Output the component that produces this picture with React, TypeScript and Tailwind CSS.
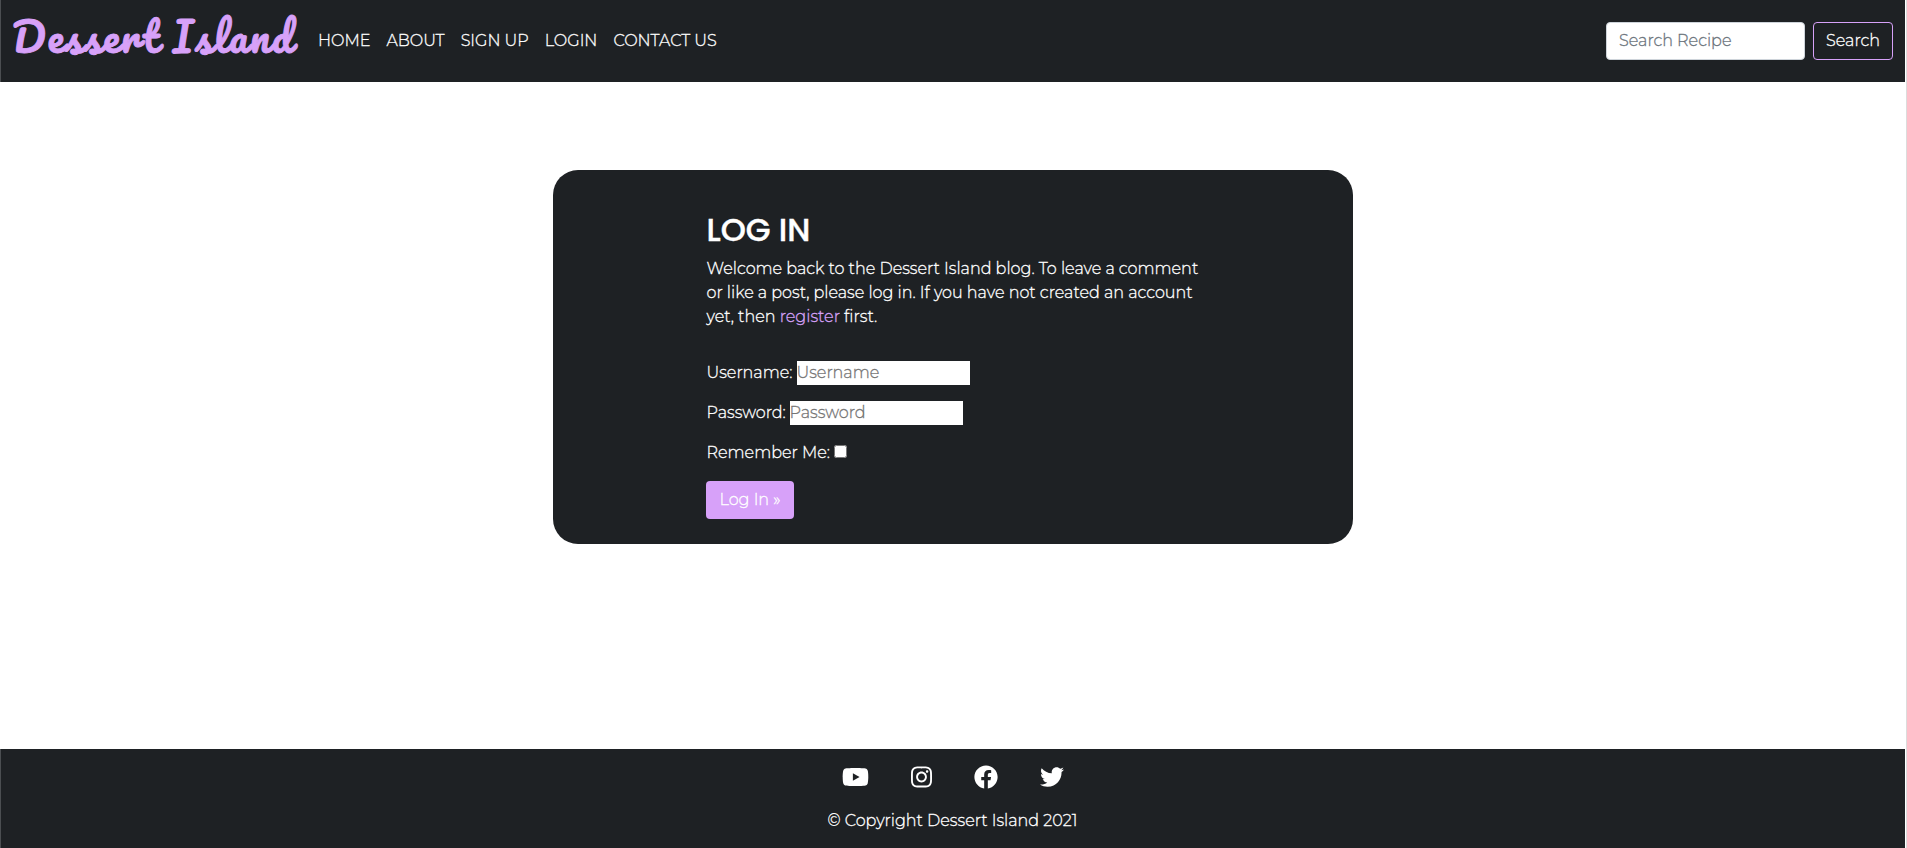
import React from "react";
import { FaFacebook, FaInstagram, FaTwitter, FaYoutube } from "react-icons/fa";

const links = ["HOME", "ABOUT", "SIGN UP", "LOGIN", "CONTACT US"];

function Navbar() {
  return (
    <nav className="flex h-[82px] items-center border-l border-[#4b4e51] bg-[#1e2124] pr-3 pl-[11px]">
      <a className="w-[298px] pb-[10px] font-['Pacifico',cursive] text-[40px] leading-[60px] font-normal tracking-[2px] whitespace-nowrap text-[#d7a1f9] [-webkit-text-stroke:0.9px_#d7a1f9]">
        Dessert Island
      </a>
      <ul className="flex">
        {links.map((label) => (
          <li key={label} className="px-2 py-2 whitespace-nowrap">
            {label}
          </li>
        ))}
      </ul>
      <form className="ml-auto flex gap-2">
        <input
          className="h-[38px] w-[199px] rounded-[4px] border border-[#ced4da] bg-white px-3 pt-[5px] pb-[7px] placeholder:text-[#6c757d] placeholder:[-webkit-text-stroke:0.3px_#6c757d]"
          placeholder="Search Recipe"
        />
        <button
          type="button"
          className="h-[38px] w-20 rounded-[4px] border border-[#d7a1f9] text-center"
        >
          Search
        </button>
      </form>
    </nav>
  );
}

function LoginCard() {
  return (
    <section className="mx-auto mt-[88px] h-[374px] w-[800px] rounded-[25px] bg-[#1e2124] pt-[41px] pl-[153px]">
      <h2 className="mb-2 pl-px font-['Poppins','Montserrat',sans-serif] text-[32px] leading-[38px] font-medium [-webkit-text-stroke:0.4px_white]">
        LOG IN
      </h2>
      <p className="w-[500px] pl-px">
        Welcome back to the Dessert Island blog. To leave a comment or like a post, please log in. If
        you have not created an account yet, then{" "}
        <a className="text-[#d7a1f9] [-webkit-text-stroke:0.3px_#d7a1f9]">register</a> first.
      </p>
      <form className="mt-[32px] flex flex-col items-start gap-4">
        <label className="flex">
          <span className="w-[91px] pl-px">Username:</span>
          <input
            className="h-6 w-[173px] bg-white placeholder:text-[#757575] placeholder:[-webkit-text-stroke:0.3px_#757575]"
            placeholder="Username"
          />
        </label>
        <label className="flex">
          <span className="w-[84px] pl-px">Password:</span>
          <input
            className="h-6 w-[173px] bg-white placeholder:text-[#757575] placeholder:[-webkit-text-stroke:0.3px_#757575]"
            placeholder="Password"
          />
        </label>
        <label className="flex items-center">
          <span className="w-[128px] pl-px">Remember Me:</span>
          <input type="checkbox" className="mb-[3px] size-[13px]" />
        </label>
        <button
          type="button"
          className="h-[38px] w-[88px] rounded-[4px] bg-[#d7a1f9] pl-px text-center"
        >
          Log In »
        </button>
      </form>
    </section>
  );
}

function Footer() {
  return (
    <footer className="mt-auto flex h-[99px] flex-col items-center border-l border-[#4b4e51] bg-[#1e2124] pt-4">
      <div className="mr-px flex gap-[42px]">
        <FaYoutube className="h-6 w-[27px]" />
        <FaInstagram className="h-6 w-[21px]" />
        <FaFacebook className="size-6" />
        <FaTwitter className="size-6" />
      </div>
      <p className="mt-5 mr-px">© Copyright Dessert Island 2021</p>
    </footer>
  );
}

export default function App() {
  return (
    <div className="h-[848px] w-full border-r border-[#dcdcdc] bg-white pr-px font-['Montserrat',sans-serif] text-base font-light text-white [-webkit-text-stroke:0.3px_white]">
      <div className="flex h-full flex-col">
        <Navbar />
        <LoginCard />
        <Footer />
      </div>
    </div>
  );
}
